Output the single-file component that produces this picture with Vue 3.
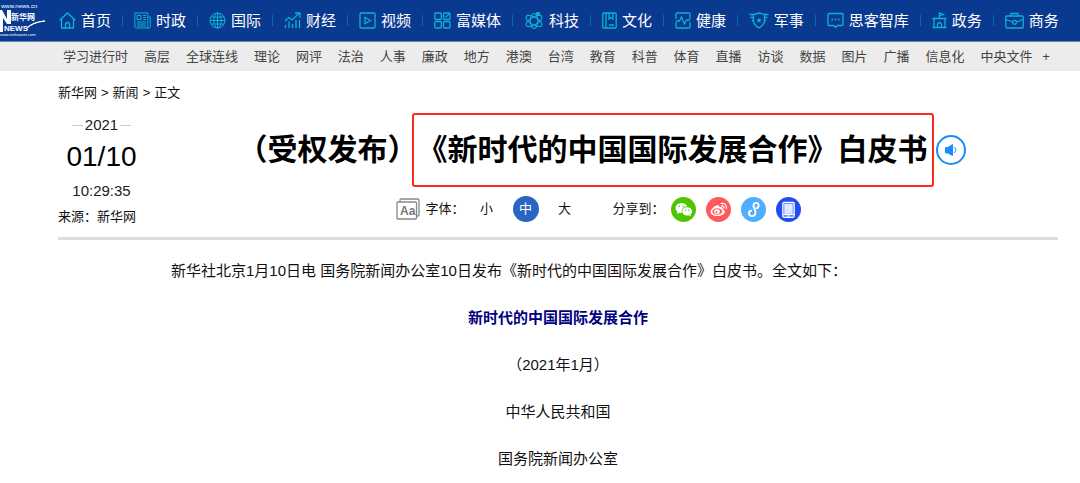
<script setup>
const channels = [
  { name: '首页', icon: 'home', w: 17 },
  { name: '时政', icon: 'paper', w: 17 },
  { name: '国际', icon: 'globe', w: 17 },
  { name: '财经', icon: 'chart', w: 17 },
  { name: '视频', icon: 'video', w: 17 },
  { name: '富媒体', icon: 'media', w: 17 },
  { name: '科技', icon: 'atom', w: 20 },
  { name: '文化', icon: 'book', w: 15 },
  { name: '健康', icon: 'pulse', w: 16 },
  { name: '军事', icon: 'shield', w: 20 },
  { name: '思客智库', icon: 'chat', w: 17 },
  { name: '政务', icon: 'gov', w: 15 },
  { name: '商务', icon: 'case', w: 19 },
]

const icons = {
  home: '<path d="M.7 8.200 8.500 1l7.800 7.200M2.500 7v9h12V7M6.500 16v-3.500a2 2 0 0 1 4 0V16"/>',
  paper: '<path d="M.8 1h13v15H2.300Q.8 16 .8 14.500zM13.800 5h2.500v9.500q0 1.500-1.300 1.500h-2M3 3.500h4v4H3zM9 3.500h3M9 5.500h3M9 7.500h3M3 10h9M3 12h9M3 14h9" stroke-width="1"/>',
  globe: '<g stroke-width="1"><circle cx="8.500" cy="8.500" r="7.500"/><ellipse cx="8.500" cy="8.500" rx="3.700" ry="7.500"/><path d="M8.500 1v15M1 8.500h15M2 5h13M2 12h13"/></g>',
  chart: '<path d="M1 9l4-3.500 3 2.500 7-6.500M11 1h5v5M1.500 16v-3M5 16v-6.500M8.500 16v-4M12 16V8M15.500 16V8"/>',
  video: '<rect x="1" y="1" width="15" height="15" rx="1"/><path d="M6 5.300v6.400l5.500-3.200z"/>',
  media: '<rect x=".8" y="1" width="6.500" height="6.500" rx="1"/><rect x="9.500" y="1" width="6.500" height="6.500" rx="1"/><rect x=".8" y="9.500" width="6.500" height="6.500" rx="1"/><rect x="9.500" y="9.500" width="6.500" height="6.500" rx="1"/><path d="M11.500 5.500l4-4"/>',
  atom: '<g stroke-width="1.100"><ellipse cx="10" cy="9" rx="3.800" ry="7.500"/><ellipse cx="10" cy="9" rx="3.800" ry="9" transform="rotate(60 10 9)"/><ellipse cx="10" cy="9" rx="3.800" ry="9" transform="rotate(120 10 9)"/></g><circle cx="14" cy="1.800" r="1.500" fill="currentColor"/>',
  book: '<rect x=".8" y="1" width="13.400" height="15" rx="1"/><path d="M4 1v15M7 1v6l2-1.500L11 7V1M7 13h5"/>',
  pulse: '<path d="M1 7V2q0-1 1-1h12q1 0 1 1v5M1 10v5q0 1 1 1h12q1 0 1-1v-5M1 9h3.500l2-4 3 7 2-4H15"/>',
  shield: '<path d="M10 1l5.500 1.500v7Q14.500 13.500 10 16 5.500 13.500 4.500 9.500v-7zM.5 2.500h4M1.500 5.500h3M3 8.500h1.500M19.500 2.500h-4M18.500 5.500h-3M17 8.500h-1.500"/><path fill="currentColor" d="M10 5.500l.8 1.700 1.900.2-1.400 1.300.4 1.900L10 9.700l-1.700.9.4-1.900-1.400-1.300 1.900-.2z" stroke="none"/>',
  chat: '<path d="M2 1.500h13q1 0 1 1v10q0 1-1 1h-4.500l-2 2-2-2H2q-1 0-1-1v-10q0-1 1-1z"/><path d="M4.500 7.500h1.500M7.800 7.500h1.500M11 7.500h1.500" stroke-width="1.800"/>',
  gov: '<path d="M.5 15.500h14M2 15.500v-9h11v9M.5 6.500h14M7.500 6V1l4 1.500-4 1.500M5.500 15.500v-3.500q2-3 4 0v3.500"/>',
  case: '<rect x=".8" y="4" width="17.400" height="12" rx="1"/><path d="M6 4V1.500h7V4M1 7.500l6.500 2.500M18 7.500l-6.500 2.500"/><circle cx="9.500" cy="10.300" r="1.900"/>',
}

const topics = ['学习进行时', '高层', '全球连线', '理论', '网评', '法治', '人事', '廉政', '地方', '港澳', '台湾', '教育', '科普', '体育', '直播', '访谈', '数据', '图片', '广播', '信息化', '中央文件', '+']
</script>

<template>
  <div class="page">
    <header class="top">
      <a href="#" class="logo" aria-label="新华网">
        <svg width="46" height="41" viewBox="0 0 46 41">
          <text x="1" y="8" class="l-url">www.news.cn</text>
          <path d="M0 10h2l5 9V10h4v14H7L3 18v14H0z" fill="#fff" />
          <text x="11" y="20" class="l-cn">新华网</text>
          <text x="4" y="31" class="l-en">NEWS</text>
          <path d="M26 29q7-7 19-8-12 1-17 6z" fill="#fff" stroke="#fff" />
          <text x="0" y="36" class="l-url2">www.xinhuanet.com</text>
        </svg>
      </a>
      <nav class="channels" aria-label="频道">
        <ul>
          <li v-for="c in channels" :key="c.name">
            <a href="#">
              <svg :width="c.w" height="17" :viewBox="`0 0 ${c.w} 17`" aria-hidden="true" v-html="icons[c.icon]"></svg>
              <span>{{ c.name }}</span>
            </a>
          </li>
        </ul>
      </nav>
    </header>

    <nav class="topics" aria-label="栏目">
      <a v-for="t in topics" :key="t" href="#">{{ t }}</a>
    </nav>

    <main class="article">
      <nav class="crumbs" aria-label="位置">
        <a href="#">新华网</a><span>&gt;</span><a href="#">新闻</a><span>&gt;</span><span>正文</span>
      </nav>

      <div class="head">
        <div class="meta">
          <div class="date">
            <span class="year">2021</span>
            <span class="day">01/10</span>
            <span class="time">10:29:35</span>
          </div>
          <div class="source">来源：新华网</div>
        </div>

        <div class="headline">
          <div class="title-row">
            <h1>（受权发布）<span class="mark">《新时代的中国国际发展合作》白皮书</span></h1>
            <button class="speak" type="button" aria-label="朗读">
              <svg width="14" height="14" viewBox="0 0 14 14">
                <path d="M1.500 4.500H4L8.500 1.500v11L4 10H1.500z" fill="#1a8cf5" stroke="#1a8cf5" stroke-linejoin="round" />
                <path d="M10.500 4q3 3 0 6" fill="none" stroke="#1a8cf5" />
              </svg>
            </button>
          </div>

          <div class="tools">
            <svg class="aa" width="24" height="22" viewBox="0 0 24 22" aria-hidden="true">
              <path d="M4 4V2q0-1 1-1h17q1 0 1 1v15q0 1-1 1h-1" fill="none" stroke="#888" stroke-width="1.300" />
              <rect x="1" y="4" width="19.500" height="17" rx="1" fill="#fff" stroke="#888" stroke-width="1.300" />
              <text x="4" y="17" class="aa-t">Aa</text>
            </svg>
            <span class="label">字体：</span>
            <div class="sizes">
              <button type="button">小</button>
              <button type="button" class="on">中</button>
              <button type="button">大</button>
            </div>
            <span class="label">分享到：</span>
            <div class="share">
              <a href="#" aria-label="微信">
                <svg width="25" height="25" viewBox="0 0 25 25">
                  <circle cx="12.500" cy="12.500" r="12.500" fill="#4fc500" />
                  <path d="M10.500 6C7 6 4.500 8.200 4.500 11c0 1.600.8 2.900 2 3.800L6 17l2.300-1.200q1.200.3 2.500.2C10.500 11.500 13 9.500 16.300 9.500 15.500 7.300 13.300 6 10.500 6z" fill="#fff" />
                  <path d="M16.200 10.300c-2.800 0-4.900 1.800-4.900 4.100s2.100 4.100 4.900 4.100q1 0 1.800-.3l1.900 1-.5-1.700c1-.8 1.700-1.800 1.700-3.100 0-2.300-2.100-4.100-4.900-4.100z" fill="#fff" />
                  <g fill="#4fc500"><circle cx="8.300" cy="9.500" r=".8" /><circle cx="12.300" cy="9.500" r=".8" /><circle cx="14.600" cy="13.300" r=".7" /><circle cx="17.800" cy="13.300" r=".7" /></g>
                </svg>
              </a>
              <a href="#" aria-label="微博">
                <svg width="25" height="25" viewBox="0 0 25 25">
                  <circle cx="12.500" cy="12.500" r="12.500" fill="#ff5a5a" />
                  <path d="M11 8.300c1.500-.5 2.800.3 2.300 2 2.500-.8 3.800.3 3.200 1.900 1.500.4 2.300 1.300 2.300 2.500 0 2.300-3.300 4.400-7.300 4.400-3.900 0-7-1.700-7-4.300C4.500 12.500 8 9.300 11 8.300z" fill="#fff" />
                  <ellipse cx="11.200" cy="14.500" rx="4.900" ry="3.200" fill="#ff5a5a" />
                  <ellipse cx="11" cy="14.600" rx="2.900" ry="2.400" fill="#fff" />
                  <circle cx="10.400" cy="15" r="1.100" fill="#ff5a5a" />
                  <path d="M15 6.500c3.500-.8 6 1.600 5.200 5M15.500 9c1.500-.4 2.700.6 2.300 2.200" fill="none" stroke="#fff" stroke-width="1.200" stroke-linecap="round" />
                </svg>
              </a>
              <a href="#" aria-label="小程序">
                <svg width="25" height="25" viewBox="0 0 25 25">
                  <circle cx="12.500" cy="12.500" r="12.500" fill="#50aeff" />
                  <path d="M15.500 11.200c3-.8 2.800-5.300-.4-5.300-1.600 0-2.600 1.100-2.600 2.800 0 3 2 3.600 2 6.600 0 2.300-1.300 3.800-3.500 3.800-3.600 0-4-4.800-.8-5.500" fill="none" stroke="#fff" stroke-width="1.900" stroke-linecap="round" />
                </svg>
              </a>
              <a href="#" aria-label="客户端">
                <svg width="25" height="25" viewBox="0 0 25 25">
                  <circle cx="12.500" cy="12.500" r="12.500" fill="#1f4df0" />
                  <rect x="6.800" y="5.300" width="11.400" height="15" rx="1.200" fill="#5f80f5" stroke="#fff" stroke-width="1.200" />
                  <rect x="8.300" y="6.800" width="8.400" height="10" fill="#e2e8fd" />
                  <path d="M7 17.500h11M11 19h3" stroke="#fff" />
                </svg>
              </a>
            </div>
          </div>
        </div>
      </div>

      <div class="body">
        <p class="lead">新华社北京1月10日电 国务院新闻办公室10日发布《新时代的中国国际发展合作》白皮书。全文如下：</p>
        <h2>新时代的中国国际发展合作</h2>
        <p class="kai">（2021年1月）</p>
        <p class="kai">中华人民共和国</p>
        <p class="kai">国务院新闻办公室</p>
      </div>
    </main>
  </div>
</template>

<style>
body {
  background: #fff;
}
</style>

<style scoped>
.page {
  font-family: "Liberation Sans", "Noto Sans CJK SC", sans-serif;
  font-size: 13px;
  color: #111;
  text-spacing-trim: space-all;
}
a {
  color: inherit;
  text-decoration: none;
}
button {
  font: inherit;
  color: inherit;
  padding: 0;
  border: 0;
  background: none;
}
svg {
  display: block;
  flex: none;
}
.top {
  display: flex;
  height: 41px;
  border-bottom: 1px solid #6c83b5;
  background: #0a3a90;
}
.logo {
  flex: none;
}
.logo text {
  fill: #fff;
}
.l-url {
  font-size: 6px;
}
.l-url2 {
  font-size: 4px;
}
.l-cn {
  font-size: 8px;
  font-weight: 700;
}
.l-en {
  font-size: 8px;
  font-weight: 700;
}
.channels {
  flex: 1;
  padding: 0 21px 0 13px;
}
.channels ul {
  display: flex;
  justify-content: space-between;
  align-items: center;
  height: 100%;
  margin: 0;
  padding: 0;
  list-style: none;
}
.channels li {
  display: flex;
  align-items: center;
}
.channels li + li::before {
  content: "";
  width: 1px;
  height: 11px;
  margin-right: 11px;
  background: #0c6aa8;
}
.channels a {
  display: flex;
  align-items: center;
  gap: 5px;
  font-size: 15px;
  line-height: 22px;
  color: #fff;
  white-space: nowrap;
}
.channels svg {
  color: #0bb4d0;
  fill: none;
  stroke: currentColor;
  stroke-width: 1.3;
}
.topics {
  display: flex;
  justify-content: space-between;
  padding: 0 30px 0 63px;
  line-height: 29px;
  color: #444;
  background: #ececec;
  white-space: nowrap;
}
.topics a:last-child {
  margin-left: -6px;
}
.article {
  padding: 12px 22px 0 58px;
}
.crumbs {
  display: flex;
  gap: 4px;
  line-height: 20px;
}
.head {
  display: flex;
  height: 134px;
  border-bottom: 3px solid #dcdcdc;
}
.meta {
  flex: none;
  width: 87px;
  padding-top: 12px;
}
.date {
  display: flex;
  flex-direction: column;
  align-items: center;
  font-size: 15px;
  color: #222;
}
.year {
  display: flex;
  align-items: center;
  gap: 2px;
  line-height: 20px;
}
.year::before,
.year::after {
  content: "";
  width: 11px;
  height: 1px;
  background: #ccc;
}
.day {
  font-size: 28px;
  line-height: 44px;
  color: #000;
}
.time {
  line-height: 24px;
}
.source {
  line-height: 28px;
  white-space: nowrap;
}
.headline {
  flex: 1;
}
.title-row {
  display: flex;
  justify-content: center;
  align-items: center;
  gap: 8px;
  padding-top: 25px;
}
h1 {
  margin: 0;
  font-size: 30px;
  line-height: 44px;
  color: #000;
  white-space: nowrap;
}
.mark {
  position: relative;
}
.mark::after {
  content: "";
  position: absolute;
  inset: -20px -6px -21px;
  border: 2px solid #fb2a1c;
  border-radius: 3px;
}
.speak {
  display: flex;
  align-items: center;
  justify-content: center;
  width: 30px;
  height: 30px;
  border: 2px solid #1a8cf5;
  border-radius: 50%;
}
.tools {
  display: flex;
  justify-content: center;
  align-items: center;
  margin-top: 24px;
  padding-right: 6px;
  line-height: 26px;
}
.aa-t {
  font-size: 12px;
  font-weight: 700;
  fill: #777;
}
.tools .label {
  margin-left: 5px;
}
.sizes {
  display: flex;
  gap: 13px;
  margin: 0 30px 0 9px;
}
.sizes button {
  width: 26px;
  height: 26px;
  border-radius: 50%;
}
.sizes .on {
  color: #fff;
  background: #2b65c4;
}
.share {
  display: flex;
  gap: 10px;
  margin-left: 6px;
}
.body {
  padding: 16px 83px 0;
  font-size: 15px;
  line-height: 30px;
}
.body p,
.body h2 {
  margin: 0 0 17px;
}
.lead {
  text-indent: 2em;
}
h2 {
  font-size: 15px;
  text-align: center;
  color: #000080;
}
.kai {
  text-align: center;
}
</style>
